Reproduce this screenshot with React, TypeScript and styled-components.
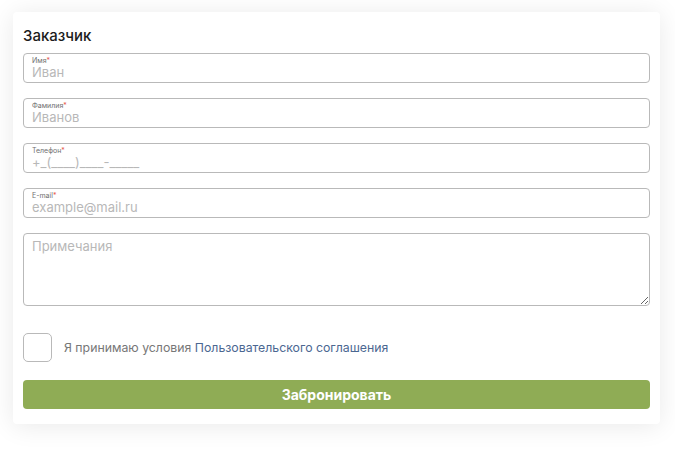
import styled, { createGlobalStyle } from "styled-components";

const GlobalStyle = createGlobalStyle`
  body {
    margin: 0;
    background: #fff;
    font-family: "Inter", "Liberation Sans", sans-serif;
  }
`;

const Page = styled.div`
  padding: 12px 15px 30px 13px;
`;

const Card = styled.form`
  background: #fff;
  border-radius: 4px;
  box-shadow: 0 2px 26px rgba(0, 0, 0, 0.09);
  padding: 15px 10px 15px;
  display: flex;
  flex-direction: column;
`;

const Title = styled.h2`
  margin: 0 0 8px;
  font-size: 15px;
  line-height: 18px;
  font-weight: 500;
  color: #1c1c1c;
`;

const Fields = styled.div`
  display: flex;
  flex-direction: column;
  gap: 15px;
`;

const Field = styled.label`
  display: flex;
  flex-direction: column;
  height: 30px;
  box-sizing: border-box;
  border: 1px solid #b9b9b9;
  border-radius: 4px;
  padding: 3px 8px 0;
`;

const FieldLabel = styled.span`
  font-size: 7px;
  line-height: 8px;
  color: #6f6f6f;

  i {
    font-style: normal;
    color: #e85a52;
  }
`;

const Value = styled.input`
  border: none;
  outline: none;
  padding: 0;
  margin: 0;
  font-family: inherit;
  font-size: 13px;
  line-height: 15px;
  height: 15px;
  color: #333;
  background: transparent;

  &::placeholder {
    color: #b8b8b8;
  }
`;

const Notes = styled.textarea`
  height: 73px;
  box-sizing: border-box;
  border: 1px solid #b9b9b9;
  border-radius: 4px;
  padding: 5px 8px;
  font-family: inherit;
  font-size: 13px;
  line-height: 15px;
  resize: vertical;
  outline: none;

  &::placeholder {
    color: #b8b8b8;
  }
`;

const Agree = styled.div`
  display: flex;
  align-items: center;
  gap: 12px;
  margin-top: 27px;
  font-size: 12.3px;
  color: #777;
`;

const Check = styled.span`
  width: 29px;
  height: 29px;
  box-sizing: border-box;
  border: 1px solid #b9b9b9;
  border-radius: 5px;
  flex-shrink: 0;
`;

const AgreeLink = styled.a`
  color: #4b6791;
  text-decoration: none;
`;

const Submit = styled.button`
  margin-top: 18px;
  height: 29px;
  border: none;
  border-radius: 4px;
  background: #8fac55;
  color: #fff;
  font-family: inherit;
  font-size: 14px;
  font-weight: 700;
  cursor: pointer;
`;

const fields = [
  { label: "Имя", placeholder: "Иван" },
  { label: "Фамилия", placeholder: "Иванов" },
  { label: "Телефон", placeholder: "+_(____)____-_____" },
  { label: "E-mail", placeholder: "example@mail.ru" },
];

export default function App() {
  return (
    <>
      <GlobalStyle />
      <Page>
        <Card onSubmit={(e) => e.preventDefault()}>
          <Title>Заказчик</Title>
          <Fields>
            {fields.map((f) => (
              <Field key={f.label}>
                <FieldLabel>
                  {f.label}
                  <i>*</i>
                </FieldLabel>
                <Value placeholder={f.placeholder} />
              </Field>
            ))}
            <Notes placeholder="Примечания" />
          </Fields>
          <Agree>
            <Check />
            <span>
              Я принимаю условия{" "}
              <AgreeLink href="#">Пользовательского соглашения</AgreeLink>
            </span>
          </Agree>
          <Submit type="submit">Забронировать</Submit>
        </Card>
      </Page>
    </>
  );
}
